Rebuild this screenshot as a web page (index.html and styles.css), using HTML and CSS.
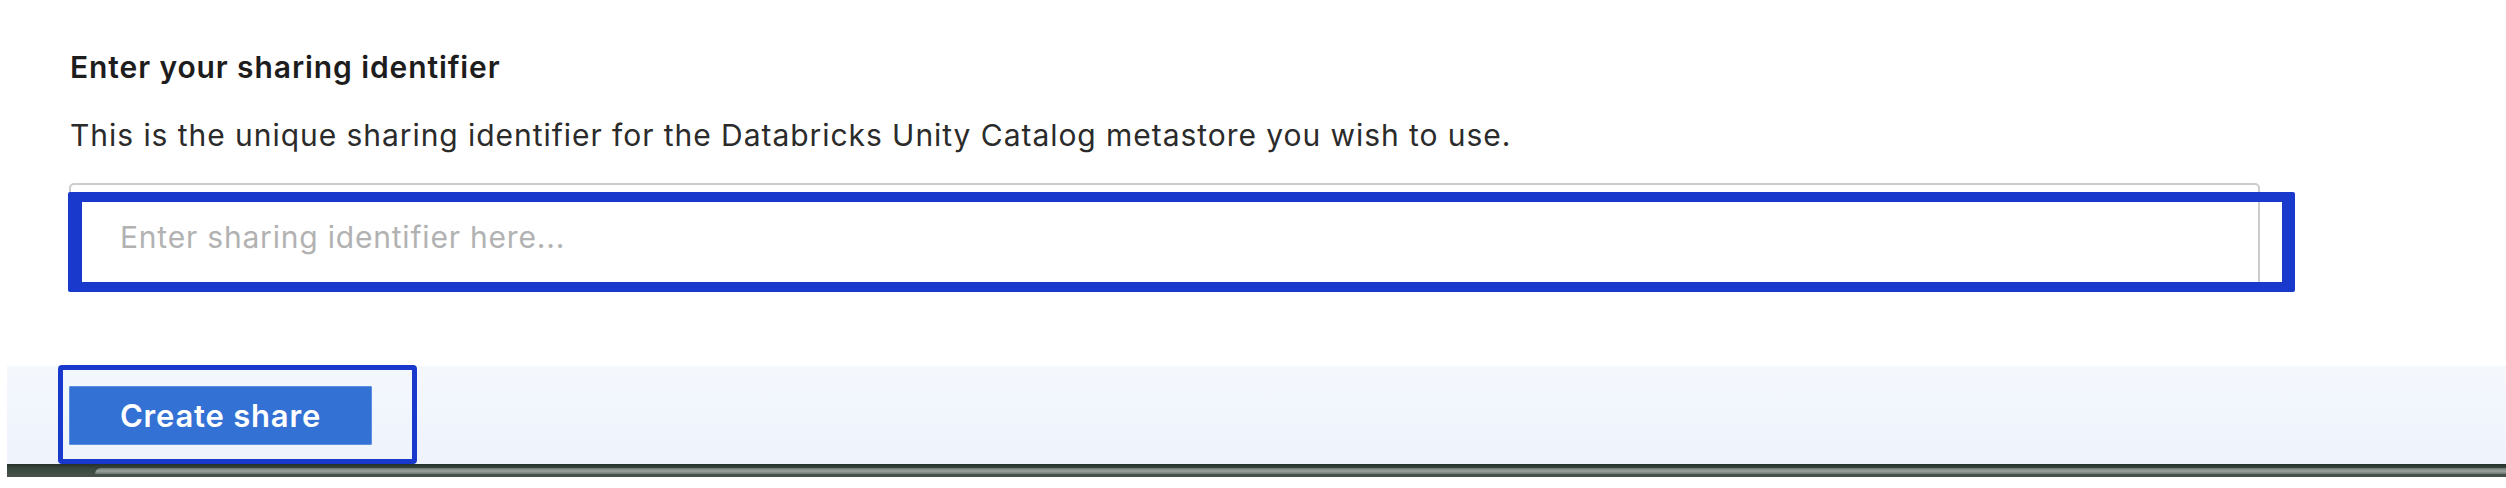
FILE: index.html
```html
<!DOCTYPE html>
<html lang="en">
<head>
<meta charset="utf-8">
<title>Create share</title>
<link rel="stylesheet" href="styles.css">
</head>
<body>
<main class="page">
  <section class="form">
    <h2 class="label">Enter your sharing identifier</h2>
    <p class="help">This is the unique sharing identifier for the Databricks Unity Catalog metastore you wish to use.</p>
    <div class="field-wrap">
      <input class="field" type="text" placeholder="Enter sharing identifier here...">
      <div class="highlight-field"></div>
    </div>
  </section>
  <footer class="actions">
    <div class="highlight-button">
      <button class="primary" type="button">Create share</button>
    </div>
  </footer>
  <div class="strip"><div class="strip-window"></div></div>
</main>
</body>
</html>
```

FILE: styles.css
```css
html, body {
  margin: 0;
  padding: 0;
  background: #ffffff;
}

.page {
  width: 2506px;
  height: 488px;
  overflow: hidden;
  font-family: "Inter", "Lato", sans-serif;
  color: #222222;
}

.form {
  padding: 49px 0 0 70px;
}

.label {
  margin: 0;
  font-size: 30px;
  line-height: 36px;
  font-weight: 600;
  letter-spacing: 0.9px;
  color: #1d1d1d;
}

.help {
  margin: 32px 0 0 0;
  font-size: 30px;
  line-height: 36px;
  font-weight: 400;
  letter-spacing: 0.95px;
  color: #2b2b2b;
}

.field-wrap {
  position: relative;
  margin: 30px 0 0 -1px;
  width: 2191px;
}

.field {
  display: block;
  box-sizing: border-box;
  width: 2191px;
  height: 107px;
  margin: 0;
  padding: 0 0 0 49px;
  border: 2px solid #cccccc;
  border-radius: 5px;
  background: #ffffff;
  font-family: "Inter", "Lato", sans-serif;
  font-size: 30px;
  letter-spacing: 0.8px;
  color: #222222;
  outline: none;
}

.field::placeholder {
  color: #b2b2b2;
}

.highlight-field {
  position: absolute;
  left: -1px;
  top: 9px;
  width: 2227px;
  height: 100px;
  box-sizing: border-box;
  border-style: solid;
  border-color: #1839cc;
  border-width: 10px 13px 10px 14px;
  border-radius: 2px;
  pointer-events: none;
}

.actions {
  margin: 76px 0 0 7px;
  height: 98px;
  padding-left: 51px;
  background: linear-gradient(to bottom, #f4f8fd, #eef3fc);
  display: flex;
  align-items: flex-start;
}

.highlight-button {
  box-sizing: border-box;
  margin-top: -1px;
  height: 99px;
  width: 359px;
  border: 5px solid #1839cc;
  border-radius: 4px;
  padding: 16px 0 0 6px;
}

.primary {
  display: flex;
  align-items: center;
  justify-content: center;
  width: 303px;
  height: 59px;
  margin: 0;
  padding: 0;
  border: 1px solid #5b8ee0;
  background: #3471d5;
  color: #ffffff;
  font-family: "Inter", "Lato", sans-serif;
  font-size: 31px;
  font-weight: 600;
  letter-spacing: 0.8px;
  border-radius: 1px;
}

.strip {
  margin-left: 7px;
  height: 13px;
  background: linear-gradient(to bottom, #26302b, #3a4a40 40%, #4a524d);
  padding-top: 4px;
  box-sizing: border-box;
}

.strip-window {
  margin-left: 88px;
  height: 6px;
  border-top-left-radius: 10px;
  background: linear-gradient(to bottom, #6d7570, #9aa39e 50%, #6f7672);
}
```
